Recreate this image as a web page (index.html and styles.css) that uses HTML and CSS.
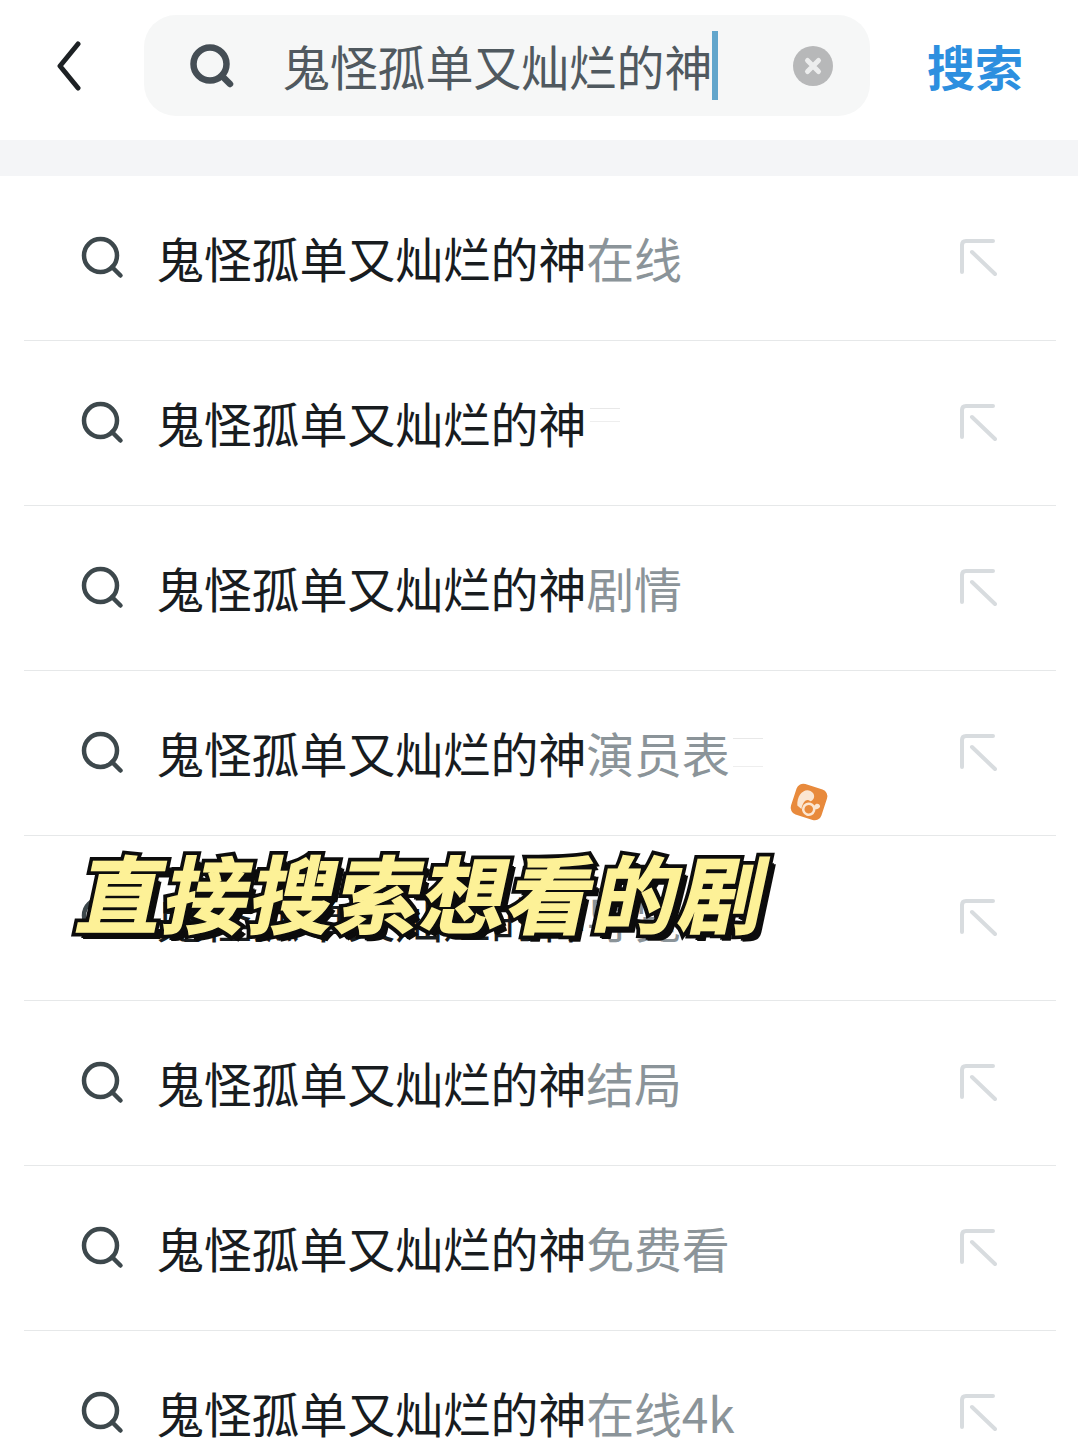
FILE: index.html
```html
<!DOCTYPE html>
<html lang="zh-CN">
<head>
  <meta charset="UTF-8" />
  <meta name="viewport" content="width=device-width, initial-scale=1.0"/>
  <title>搜索</title>
  <link rel="stylesheet" href="styles.css">
</head>
<body>
  <header class="top">
    <svg class="back" viewBox="0 0 24 50"><path d="M21 3 L3 25 L21 47" /></svg>
    <div class="box">
      <svg class="box-icon" viewBox="0 0 44 44"><circle cx="20" cy="20" r="16.5"/><path d="M32 32 L40 40"/></svg>
      <span class="query">鬼怪孤单又灿烂的神</span><span class="caret"></span>
      <span class="clear"><svg viewBox="0 0 40 40"><path d="M14.5 14.5 L25.5 25.5 M25.5 14.5 L14.5 25.5"/></svg></span>
    </div>
    <span class="go">搜索</span>
  </header>
  <div class="band"></div>

  <ul class="list">
    <li class="row">
      <svg class="mag" viewBox="0 0 44 44"><circle cx="19.5" cy="19.5" r="16.5"/><path d="M31 31 L39.5 39.5"/></svg>
      <span class="txt">鬼怪孤单又灿烂的神<em>在线</em></span>
      <svg class="fill" viewBox="0 0 38 38"><path d="M3 33 V6 Q3 2 7 2 H34 M13 13 L36 35"/></svg>
    </li>
    <li class="row">
      <svg class="mag" viewBox="0 0 44 44"><circle cx="19.5" cy="19.5" r="16.5"/><path d="M31 31 L39.5 39.5"/></svg>
      <span class="txt">鬼怪孤单又灿烂的神<i class="ghost ghost-short"></i></span>
      <svg class="fill" viewBox="0 0 38 38"><path d="M3 33 V6 Q3 2 7 2 H34 M13 13 L36 35"/></svg>
    </li>
    <li class="row">
      <svg class="mag" viewBox="0 0 44 44"><circle cx="19.5" cy="19.5" r="16.5"/><path d="M31 31 L39.5 39.5"/></svg>
      <span class="txt">鬼怪孤单又灿烂的神<em>剧情</em></span>
      <svg class="fill" viewBox="0 0 38 38"><path d="M3 33 V6 Q3 2 7 2 H34 M13 13 L36 35"/></svg>
    </li>
    <li class="row">
      <svg class="mag" viewBox="0 0 44 44"><circle cx="19.5" cy="19.5" r="16.5"/><path d="M31 31 L39.5 39.5"/></svg>
      <span class="txt">鬼怪孤单又灿烂的神<em>演员表</em><i class="ghost"></i></span>
      <svg class="fill" viewBox="0 0 38 38"><path d="M3 33 V6 Q3 2 7 2 H34 M13 13 L36 35"/></svg>
    </li>
    <li class="row">
      <svg class="mag" viewBox="0 0 44 44"><circle cx="19.5" cy="19.5" r="16.5"/><path d="M31 31 L39.5 39.5"/></svg>
      <span class="txt">鬼怪孤单又灿烂的神<em>导览</em></span>
      <svg class="fill" viewBox="0 0 38 38"><path d="M3 33 V6 Q3 2 7 2 H34 M13 13 L36 35"/></svg>
    </li>
    <li class="row">
      <svg class="mag" viewBox="0 0 44 44"><circle cx="19.5" cy="19.5" r="16.5"/><path d="M31 31 L39.5 39.5"/></svg>
      <span class="txt">鬼怪孤单又灿烂的神<em>结局</em></span>
      <svg class="fill" viewBox="0 0 38 38"><path d="M3 33 V6 Q3 2 7 2 H34 M13 13 L36 35"/></svg>
    </li>
    <li class="row">
      <svg class="mag" viewBox="0 0 44 44"><circle cx="19.5" cy="19.5" r="16.5"/><path d="M31 31 L39.5 39.5"/></svg>
      <span class="txt">鬼怪孤单又灿烂的神<em>免费看</em></span>
      <svg class="fill" viewBox="0 0 38 38"><path d="M3 33 V6 Q3 2 7 2 H34 M13 13 L36 35"/></svg>
    </li>
    <li class="row">
      <svg class="mag" viewBox="0 0 44 44"><circle cx="19.5" cy="19.5" r="16.5"/><path d="M31 31 L39.5 39.5"/></svg>
      <span class="txt">鬼怪孤单又灿烂的神<em>在线4k</em></span>
      <svg class="fill" viewBox="0 0 38 38"><path d="M3 33 V6 Q3 2 7 2 H34 M13 13 L36 35"/></svg>
    </li>
  </ul>

  <!-- sticker and caption sit on top of the list -->
  <svg class="badge" viewBox="0 0 36 36">
    <rect x="2" y="2" width="32" height="32" rx="7" fill="#e88a3c"/>
    <path d="M8 25 C4 15 9 6 16 7 C22 8 23 14 19 17 C15 15 12 19 13 27 Z" fill="#fbe6d2"/>
    <circle cx="20" cy="25" r="5.5" fill="none" stroke="#fbe6d2" stroke-width="2.5"/>
    <path d="M24 20 C25 16 29 16 30 19 C29 22 27 23 25 23 Z" fill="#fbe6d2"/>
  </svg>
  <div class="caption" data-text="直接搜索想看的剧">直接搜索想看的剧</div>
</body>
</html>
```

FILE: styles.css
```css
* {
  box-sizing: border-box;
}
html, body {
  margin: 0;
  padding: 0;
}
body {
  width: 1078px;
  height: 1438px;
  overflow: hidden;
  position: relative;
  background: #fff;
  font-family: "Noto Sans CJK SC", "Noto Sans", sans-serif;
}
.top {
  height: 140px;
  display: flex;
  align-items: flex-start;
  padding-top: 15px;
}
.back {
  width: 24px;
  height: 50px;
  margin: 26px 0 0 57px;
  flex: none;
}
.back path {
  fill: none;
  stroke: #1d2124;
  stroke-width: 5;
  stroke-linecap: round;
  stroke-linejoin: round;
}
.box {
  width: 726px;
  height: 101px;
  margin-left: 63px;
  border-radius: 32px;
  background: #f6f7f7;
  display: flex;
  align-items: center;
  padding-left: 46px;
  flex: none;
}
.box-icon {
  width: 44px;
  height: 44px;
  flex: none;
}
.box-icon circle, .box-icon path {
  fill: none;
  stroke: #454e55;
  stroke-width: 6.5;
  stroke-linecap: round;
}
.query {
  margin: -1px 0 0 48px;
  font-size: 48px;
  letter-spacing: -0.2px;
  line-height: 60px;
  color: #50595f;
  white-space: nowrap;
}
.caret {
  width: 6px;
  height: 69px;
  background: #62a6cc;
  flex: none;
}
.clear {
  width: 40px;
  height: 40px;
  margin-left: 75px;
  border-radius: 50%;
  background: #b7b8b9;
  flex: none;
}
.clear svg {
  display: block;
}
.clear path {
  stroke: #eceded;
  stroke-width: 5;
  stroke-linecap: round;
}
.go {
  margin: 20px 0 0 57px;
  font-size: 48px;
  line-height: 60px;
  font-weight: 700;
  color: #2d8fdf;
  white-space: nowrap;
}
.band {
  height: 36px;
  background: #f4f5f7;
}
.list {
  list-style: none;
  margin: 0 22px 0 24px;
  padding: 0;
}
.row {
  height: 165px;
  display: flex;
  align-items: center;
  border-bottom: 1px solid #e6e8e9;
  padding: 0 59px 0 57px;
}
.mag {
  width: 44px;
  height: 44px;
  flex: none;
}
.mag circle, .mag path {
  fill: none;
  stroke: #3d484c;
  stroke-width: 4.5;
  stroke-linecap: round;
}
.txt {
  margin: -2px 0 0 31px;
  font-size: 48px;
  letter-spacing: -0.2px;
  line-height: 60px;
  color: #181c1f;
  white-space: nowrap;
  display: flex;
  align-items: center;
}
.txt em {
  font-style: normal;
  color: #8b9499;
}
.ghost {
  display: block;
  width: 30px;
  height: 29px;
  border-top: 1px solid #e8e8e8;
  border-bottom: 1px solid #eeeeee;
  margin: 0 0 0 3px;
}
.ghost-short {
  height: 14px;
  margin: -14px 0 0 4px;
}
.fill {
  width: 38px;
  height: 38px;
  margin-left: auto;
  flex: none;
}
.fill path {
  fill: none;
  stroke: #d8dcdf;
  stroke-width: 4;
  stroke-linecap: round;
  stroke-linejoin: round;
}
.badge {
  position: absolute;
  left: 791px;
  top: 784px;
  width: 36px;
  height: 36px;
  transform: rotate(18deg);
}
.caption {
  position: absolute;
  left: 70px;
  top: 836px;
  font-size: 84px;
  letter-spacing: 2px;
  line-height: 110px;
  font-weight: 700;
  white-space: nowrap;
  color: #fdf197;
  -webkit-text-stroke: 1.5px #fdf197;
  transform: skewX(-12deg);
  transform-origin: left bottom;
}
/* black outline and drop behind the thickened letters */
.caption::before {
  content: attr(data-text);
  position: absolute;
  left: 0;
  top: 0;
  z-index: -1;
  color: #0c0c0c;
  -webkit-text-stroke: 9px #0c0c0c;
  text-shadow: 3px 3px 0 #0c0c0c, 6px 6px 0 #0c0c0c, 8px 7px 0 #0c0c0c;
}
```
